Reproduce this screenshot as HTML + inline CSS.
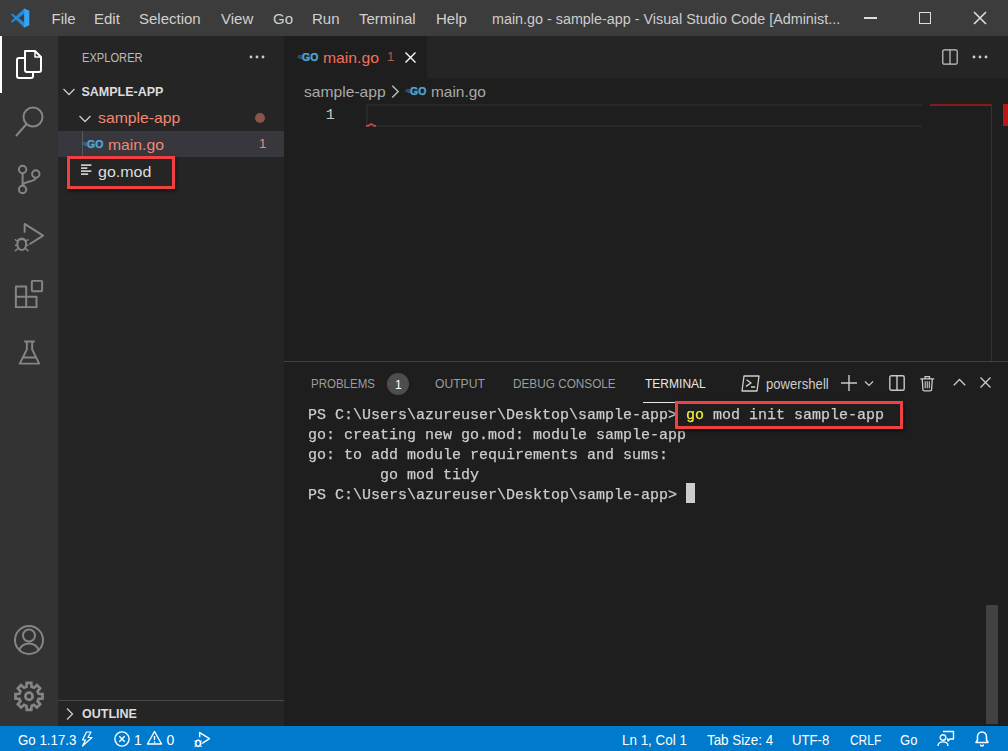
<!DOCTYPE html>
<html><head><meta charset="utf-8">
<style>
*{box-sizing:border-box;margin:0;padding:0}
html,body{width:1008px;height:751px;overflow:hidden;background:#1e1e1e;font-family:"Liberation Sans",sans-serif;color:#ccc}
.abs{position:absolute}
#title{left:0;top:0;width:1008px;height:36px;background:#3c3c3c}
#title span{position:absolute;top:10px;font-size:15px;color:#d0d0d0;white-space:nowrap;line-height:18px}
#act{left:0;top:36px;width:58px;height:690px;background:#333333}
#side{left:58px;top:36px;width:226px;height:690px;background:#252526}
#tabs{left:284px;top:36px;width:724px;height:42px;background:#252526}
#tab{left:284px;top:36px;width:143px;height:42px;background:#1e1e1e}
#status{left:0;top:726px;width:1008px;height:25px;background:#007acc}
#status span{position:absolute;top:5px;font-size:14px;color:#fff;white-space:nowrap;line-height:18px;transform-origin:0 0}
.t{position:absolute;white-space:nowrap}
.term{will-change:transform;-webkit-text-stroke:.25px;position:absolute;left:308px;font-family:"Liberation Mono",monospace;font-size:15px;color:#cccccc;white-space:pre;line-height:20px}
.redbox{position:absolute;border:3px solid #f04141;box-shadow:1px 2px 3px rgba(0,0,0,.55)}
</style></head><body>
<div id="title" class="abs">
<svg class="abs" style="left:10.200px;top:7.500px" width="20" height="20" viewBox="0 0 100 100"><path d="M71 3 L30 41 L12 27 L4 31 L22 50 L4 69 L12 73 L30 59 L71 97 L96 86 L96 14 Z M72 28 L72 72 L43 50 Z" fill="#2489d6" fill-rule="evenodd"/><path d="M71 3 L96 14 V86 L71 97 Z" fill="#39a3f2"/></svg>
<span style="left:51.500px">File</span><span style="left:94px">Edit</span><span style="left:139px">Selection</span><span style="left:221px">View</span><span style="left:273px">Go</span><span style="left:312px">Run</span><span style="left:359px">Terminal</span><span style="left:436px">Help</span>
<span style="left:492px;font-size:14.350px;color:#ccc">main.go - sample-app - Visual Studio Code [Administ...</span>
<div class="abs" style="left:864px;top:17px;width:13px;height:1.500px;background:#ddd"></div>
<div class="abs" style="left:919px;top:12px;width:12px;height:12px;border:1.500px solid #ddd"></div>
<svg class="abs" style="left:973px;top:11px" width="14" height="14" viewBox="0 0 14 14"><path d="M1 1 L13 13 M13 1 L1 13" stroke="#ddd" stroke-width="1.600" fill="none"/></svg>
</div>
<div id="act" class="abs"></div>
<div class="abs" style="left:0;top:36px;width:2px;height:57px;background:#fff"></div>
<svg class="abs" style="left:14.500px;top:48px" width="28" height="32" viewBox="0 0 28 32" fill="none" stroke="#fff" stroke-width="2" stroke-linejoin="round"><path d="M10 3 H20 L26 9 V22 a2 2 0 0 1 -2 2 H12 a2 2 0 0 1 -2 -2 Z"/><path d="M20 3 V9 H26" stroke-width="1.500"/><path d="M9 10 H4 a2 2 0 0 0 -2 2 V28 a2 2 0 0 0 2 2 H16 a2 2 0 0 0 2 -2 V24"/></svg>
<svg class="abs" style="left:14px;top:104px" width="32" height="34" viewBox="0 0 32 34" fill="none" stroke="#858585" stroke-width="2"><circle cx="19" cy="13" r="9.500"/><path d="M12.500 20 L2 32"/></svg>
<svg class="abs" style="left:14px;top:160px" width="30" height="38" viewBox="0 0 30 38" fill="none" stroke="#858585" stroke-width="2"><circle cx="8.600" cy="9.500" r="3.700"/><circle cx="8.600" cy="29.500" r="3.700"/><circle cx="21.800" cy="14" r="3.700"/><path d="M8.600 13.200 V25.800 M21.800 17.700 C21.800 22.500 8.600 20.500 8.600 25.800"/></svg>
<svg class="abs" style="left:12.500px;top:221px" width="33" height="33" viewBox="0 0 34 34" fill="none" stroke="#858585" stroke-width="2" stroke-linejoin="round"><path d="M12 12 V3 L31 15 L17 24"/><ellipse cx="9" cy="24" rx="4.500" ry="6"/><path d="M5 19 H13 M2 19 L5 21 M16 19 L13 21 M2 25 H4.500 M13.500 25 H16 M2 31 L5 28.500 M16 31 L13 28.500" stroke-width="1.500"/></svg>
<svg class="abs" style="left:14px;top:279px" width="30" height="30" viewBox="0 0 32 32" fill="none" stroke="#858585" stroke-width="2.100" stroke-linejoin="round"><path d="M2 8 H13 V19 H24 V30 H2 Z M2 19 H13 V30"/><rect x="19" y="2" width="11" height="11" rx="1"/></svg>
<svg class="abs" style="left:17.500px;top:339px" width="23" height="28" viewBox="0 0 26 30" fill="none" stroke="#858585" stroke-width="2.200" stroke-linejoin="round"><path d="M7 2 H19 M10 2 V11 L2 27 H24 L16 11 V2 M5.500 20 H20.500"/></svg>
<svg class="abs" style="left:13px;top:624px" width="32" height="32" viewBox="0 0 32 32" fill="none" stroke="#858585" stroke-width="2"><circle cx="16" cy="16" r="14"/><circle cx="16" cy="11.500" r="6"/><path d="M6.500 26.500 C7.500 17.300 24.500 17.300 25.500 26.500"/></svg>
<svg class="abs" style="left:13px;top:680px" width="32" height="32" viewBox="0 0 32 32" fill="none" stroke="#858585" stroke-width="2.700" stroke-linejoin="miter"><circle cx="16" cy="16.300" r="3.600"/><path d="M13.44 6.74 L13.74 2.79 L18.26 2.79 L18.56 6.74 L20.95 7.73 L23.96 5.15 L27.15 8.34 L24.57 11.35 L25.56 13.74 L29.51 14.04 L29.51 18.56 L25.56 18.86 L24.57 21.25 L27.15 24.26 L23.96 27.45 L20.95 24.87 L18.56 25.86 L18.26 29.81 L13.74 29.81 L13.44 25.86 L11.05 24.87 L8.04 27.45 L4.85 24.26 L7.43 21.25 L6.44 18.86 L2.49 18.56 L2.49 14.04 L6.44 13.74 L7.43 11.35 L4.85 8.34 L8.04 5.15 L11.05 7.73 Z"/></svg>
<div id="side" class="abs"></div>
<div class="t" style="left:81.5px;top:51px;font-size:12.5px;color:#bbb;line-height:15px;transform:scaleX(0.89);transform-origin:0 0;">EXPLORER</div>
<svg class="abs" style="left:248px;top:54px" width="18" height="6" viewBox="0 0 18 6" fill="#ccc"><circle cx="3" cy="3" r="1.4"/><circle cx="9" cy="3" r="1.4"/><circle cx="15" cy="3" r="1.4"/></svg>
<svg class="abs" style="left:62.2px;top:86px" width="14" height="12" viewBox="0 0 14 12" fill="none" stroke="#ccc" stroke-width="1.300"><path d="M1.500 3 L7 8.500 L12.500 3"/></svg>
<div class="t" style="left:81.5px;top:83.5px;font-size:12.5px;color:#ddd;line-height:16px;font-weight:bold;">SAMPLE-APP</div>
<svg class="abs" style="left:77.8px;top:113px" width="14" height="12" viewBox="0 0 14 12" fill="none" stroke="#ccc" stroke-width="1.300"><path d="M1.500 3 L7 8.500 L12.500 3"/></svg>
<div class="t" style="left:98px;top:108px;font-size:15px;color:#f48771;line-height:20px;transform:scaleX(1.051);transform-origin:0 0;">sample-app</div>
<div class="abs" style="left:254.500px;top:112.500px;width:10px;height:10px;border-radius:5px;background:#8c5347"></div>
<div class="abs" style="left:58px;top:131px;width:226px;height:26px;background:#37373d"></div>
<div class="abs" style="left:82px;top:131px;width:1px;height:26px;background:#585858"></div>
<svg class="abs" style="left:81.5px;top:139.9px" width="23" height="10" viewBox="0 0 23 10"><path d="M1.2 2.800 H5.300 M0 4.100 H5.300 M2.500 5.400 H5.300" stroke="#4a9fd0" stroke-opacity=".7" stroke-width=".8" fill="none"/><text x="5.100" y="8.200" font-family="Liberation Sans, sans-serif" font-weight="bold" font-size="10.800" textLength="16.200" lengthAdjust="spacingAndGlyphs" fill="#4fa3d2" stroke="#4fa3d2" stroke-width=".4">GO</text></svg>
<div class="t" style="left:108.3px;top:134.5px;font-size:15px;color:#f48771;line-height:20px;transform:scaleX(1.047);transform-origin:0 0;">main.go</div>
<div class="t" style="left:259px;top:136px;font-size:13px;color:#f48771;line-height:16px;">1</div>
<div class="t" style="left:98.3px;top:161.6px;font-size:15px;color:#ddd;line-height:20px;transform:scaleX(1.065);transform-origin:0 0;">go.mod</div>
<svg class="abs" style="left:80.600px;top:164px" width="11" height="12" viewBox="0 0 11 12" stroke="#c8c8c8" stroke-width="1.900"><path d="M0 1.100 H10.400 M0 4.100 H6.300 M0 7.100 H10.400 M0 10.100 H7.200"/></svg>
<div class="redbox" style="left:67px;top:156px;width:108px;height:33px"></div>
<div class="abs" style="left:58px;top:700px;width:226px;height:1px;background:#484848"></div>
<svg class="abs" style="left:64px;top:706.5px" width="12" height="14" viewBox="0 0 12 14" fill="none" stroke="#ccc" stroke-width="1.300"><path d="M3 1.500 L8.500 7 L3 12.500"/></svg>
<div class="t" style="left:82px;top:705.5px;font-size:12.5px;color:#ddd;line-height:16px;font-weight:bold;">OUTLINE</div>
<div id="tabs" class="abs"></div>
<div id="tab" class="abs"></div>
<svg class="abs" style="left:296.5px;top:52.5px" width="23" height="10" viewBox="0 0 23 10"><path d="M1.2 2.800 H5.300 M0 4.100 H5.300 M2.500 5.400 H5.300" stroke="#4a9fd0" stroke-opacity=".7" stroke-width=".8" fill="none"/><text x="5.100" y="8.200" font-family="Liberation Sans, sans-serif" font-weight="bold" font-size="10.800" textLength="16.200" lengthAdjust="spacingAndGlyphs" fill="#4fa3d2" stroke="#4fa3d2" stroke-width=".4">GO</text></svg>
<div class="t" style="left:322.8px;top:47.5px;font-size:15px;color:#f3705a;line-height:20px;transform:scaleX(1.047);transform-origin:0 0;">main.go</div>
<div class="t" style="left:387px;top:49px;font-size:13px;color:#b95a4c;line-height:16px;">1</div>
<svg class="abs" style="left:405px;top:52px" width="11" height="11" viewBox="0 0 11 11"><path d="M.5 .5 L10.500 10.500 M10.500 .5 L.5 10.500" stroke="#fff" stroke-width="1.400" fill="none"/></svg>
<svg class="abs" style="left:942px;top:49px" width="16" height="16" viewBox="0 0 16 16" fill="none" stroke="#c8c8c8" stroke-width="1.200"><rect x=".8" y=".8" width="14.400" height="14.400" rx="1.500"/><path d="M8 .8 V15.200"/></svg>
<svg class="abs" style="left:971.3px;top:54.3px" width="18" height="6" viewBox="0 0 18 6" fill="#ccc"><circle cx="3" cy="3" r="1.4"/><circle cx="9" cy="3" r="1.4"/><circle cx="15" cy="3" r="1.4"/></svg>
<div class="t" style="left:303.6px;top:82.2px;font-size:15px;color:#a9a9a9;line-height:20px;transform:scaleX(1.042);transform-origin:0 0;">sample-app</div>
<svg class="abs" style="left:388.7px;top:84.3px" width="13" height="15.200" viewBox="0 0 12 14" fill="none" stroke="#bdbdbd" stroke-width="1.300"><path d="M3 1.500 L8.500 7 L3 12.500"/></svg>
<svg class="abs" style="left:405px;top:86.8px" width="23" height="10" viewBox="0 0 23 10"><path d="M1.2 2.800 H5.300 M0 4.100 H5.300 M2.500 5.400 H5.300" stroke="#4a9fd0" stroke-opacity=".7" stroke-width=".8" fill="none"/><text x="5.100" y="8.200" font-family="Liberation Sans, sans-serif" font-weight="bold" font-size="10.800" textLength="16.200" lengthAdjust="spacingAndGlyphs" fill="#4fa3d2" stroke="#4fa3d2" stroke-width=".4">GO</text></svg>
<div class="t" style="left:431.3px;top:82.2px;font-size:15px;color:#a9a9a9;line-height:20px;transform:scaleX(1.029);transform-origin:0 0;">main.go</div>
<div class="t" style="left:325.800px;top:105.700px;font-family:'Liberation Mono',monospace;font-size:15px;color:#c6c6c6;line-height:20px">1</div>
<div class="abs" style="left:366px;top:104px;width:556px;height:23px;border:2px solid #282828;border-right:none"></div>
<svg class="abs" style="left:366px;top:123.100px" width="11" height="4" viewBox="0 0 11 4" fill="none" stroke="#e84848" stroke-width="1.400"><path d="M0 2.700 L2.300 2.700 L5.400 .8 L8 2.700 L10 2.700"/></svg>
<div class="abs" style="left:930px;top:104px;width:61px;height:2px;background:#841b1b"></div>
<div class="abs" style="left:991px;top:104px;width:1px;height:257px;background:#333"></div>
<div class="abs" style="left:1003px;top:104px;width:5px;height:22px;background:#bb1616"></div>
<div class="abs" style="left:284px;top:361px;width:724px;height:1px;background:#414141"></div>
<div class="t" style="left:311px;top:377px;font-size:12.5px;color:#9d9d9d;line-height:15px;transform:scaleX(0.92);transform-origin:0 0;">PROBLEMS</div>
<div class="abs" style="left:387px;top:373px;width:22px;height:22px;border-radius:11px;background:#4d4d4d"></div>
<div class="t" style="left:395px;top:378px;font-size:12px;color:#fff;line-height:15px;">1</div>
<div class="t" style="left:435.2px;top:377px;font-size:12.5px;color:#9d9d9d;line-height:15px;transform:scaleX(0.97);transform-origin:0 0;">OUTPUT</div>
<div class="t" style="left:513px;top:377px;font-size:12.5px;color:#9d9d9d;line-height:15px;transform:scaleX(0.942);transform-origin:0 0;">DEBUG CONSOLE</div>
<div class="t" style="left:644.6px;top:377px;font-size:12.5px;color:#e7e7e7;line-height:15px;transform:scaleX(0.962);transform-origin:0 0;">TERMINAL</div>
<div class="abs" style="left:642.500px;top:402px;width:66px;height:1px;background:#e7e7e7"></div>
<svg class="abs" style="left:741px;top:375px" width="19" height="17" viewBox="0 0 19 17" fill="none" stroke="#d0d0d0" stroke-width="1.300" stroke-linejoin="round"><path d="M3 1 H18 L16 16 H1 Z"/><path d="M5.500 4.800 L10 8 L5 11.300 M10 12 H14.200" stroke-width="1.400"/></svg>
<div class="t" style="left:765.5px;top:375px;font-size:14px;color:#ccc;line-height:18px;transform:scaleX(0.937);transform-origin:0 0;">powershell</div>
<svg class="abs" style="left:841px;top:375px" width="16" height="16" viewBox="0 0 16 16" stroke="#ccc" stroke-width="1.400"><path d="M8 0 V16 M0 8 H16"/></svg>
<svg class="abs" style="left:864px;top:380px" width="10" height="8" viewBox="0 0 10 8" fill="none" stroke="#ccc" stroke-width="1.200"><path d="M1 1.500 L5 5.500 L9 1.500"/></svg>
<svg class="abs" style="left:889.2px;top:375px" width="16" height="16" viewBox="0 0 16 16" fill="none" stroke="#c8c8c8" stroke-width="1.400"><rect x=".8" y=".8" width="14.400" height="14.400" rx="1.500"/><path d="M8 .8 V15.200"/></svg>
<svg class="abs" style="left:920px;top:374.500px" width="14.500" height="17" viewBox="0 0 14.500 17" fill="none" stroke="#ccc" stroke-width="1.300" stroke-linejoin="round"><path d="M.3 3.800 H14.200 M5 3.800 V1.600 H9.500 V3.800 M2.200 3.800 L2.900 14.500 Q3 15.800 4.300 15.800 H10.200 Q11.500 15.800 11.600 14.500 L12.300 3.800"/><path d="M5.200 6.300 V13.200 M7.250 6.300 V13.200 M9.300 6.300 V13.200" stroke-width="1.100"/></svg>
<svg class="abs" style="left:952.500px;top:378px" width="13" height="8" viewBox="0 0 13 8" fill="none" stroke="#ccc" stroke-width="1.300"><path d="M.8 7.200 L6.500 1.500 L12.200 7.200"/></svg>
<svg class="abs" style="left:979.500px;top:377px" width="11" height="11" viewBox="0 0 11 11"><path d="M.5 .5 L10.500 10.500 M10.500 .5 L.5 10.500" stroke="#ccc" stroke-width="1.300" fill="none"/></svg>
<div class="term" style="top:406px">PS C:\Users\azureuser\Desktop\sample-app&gt; <span style="color:#f0f038">go</span> mod init sample-app</div>
<div class="term" style="top:426px">go: creating new go.mod: module sample-app</div>
<div class="term" style="top:446px">go: to add module requirements and sums:</div>
<div class="term" style="top:466px">        go mod tidy</div>
<div class="term" style="top:486px">PS C:\Users\azureuser\Desktop\sample-app&gt; </div>
<div class="abs" style="left:686px;top:483px;width:9px;height:20px;background:#ccc"></div>
<div class="redbox" style="left:675px;top:401px;width:228px;height:28px"></div>
<div class="abs" style="left:986px;top:605px;width:12px;height:119px;background:#424242"></div>
<div id="status" class="abs">
<span style="left:18px;transform:scaleX(.95)">Go 1.17.3</span>
<svg class="abs" style="left:80.800px;top:5px" width="12" height="16" viewBox="0 0 12 16" fill="none" stroke="#fff" stroke-width="1.200" stroke-linejoin="round"><path d="M5.500 1 H10 L7 6.500 H11 L1.500 15 L4.500 9 H1.500 Z"/></svg>
<svg class="abs" style="left:114.200px;top:4.600px" width="16" height="16" viewBox="0 0 16 16" fill="none" stroke="#fff" stroke-width="1.400"><circle cx="8" cy="8" r="7.100"/><path d="M5.300 5.300 L10.700 10.700 M10.700 5.300 L5.300 10.700"/></svg>
<span style="left:134px">1</span>
<svg class="abs" style="left:146px;top:4px" width="17" height="16" viewBox="0 0 17 16" fill="none" stroke="#fff" stroke-width="1.400" stroke-linejoin="round"><path d="M8.500 1.500 L15.500 14 H1.500 Z M8.500 6 V10 M8.500 11.300 V12.700"/></svg>
<span style="left:166.500px">0</span>
<svg class="abs" style="left:193px;top:5.200px" width="18.500" height="17.500" viewBox="0 0 34 34" fill="none" stroke="#fff" stroke-width="2.800" stroke-linejoin="round"><path d="M12 12 V3 L31 15 L17 24"/><ellipse cx="9" cy="24" rx="4.500" ry="6"/><path d="M2 19 L5 21 M16 19 L13 21 M2 25 H4.500 M13.500 25 H16 M2 31 L5 28.500 M16 31 L13 28.500" stroke-width="2"/></svg>
<span style="left:622px;transform:scaleX(.958)">Ln 1, Col 1</span>
<span style="left:707px;transform:scaleX(.954)">Tab Size: 4</span>
<span style="left:792px;transform:scaleX(.94)">UTF-8</span>
<span style="left:849.500px;transform:scaleX(.853)">CRLF</span>
<span style="left:900px;transform:scaleX(.93)">Go</span>
<svg class="abs" style="left:937px;top:4px" width="18" height="17" viewBox="0 0 18 17" fill="none" stroke="#fff" stroke-width="1.400" stroke-linejoin="round"><path d="M6 1.500 H16.500 V9 H13 L11 11 V9 H10"/><circle cx="6" cy="7.500" r="2.800"/><path d="M1 16 C1 10.500 11 10.500 11 16"/></svg>
<svg class="abs" style="left:974px;top:3.800px" width="16" height="17" viewBox="0 0 16 17" fill="none" stroke="#fff" stroke-width="1.500" stroke-linejoin="round"><path d="M2 12.500 H14 L12.500 10 V6.500 a4.500 4.500 0 0 0 -9 0 V10 Z M6.500 14.500 a1.500 1.500 0 0 0 3 0"/></svg>
</div>
</body></html>
